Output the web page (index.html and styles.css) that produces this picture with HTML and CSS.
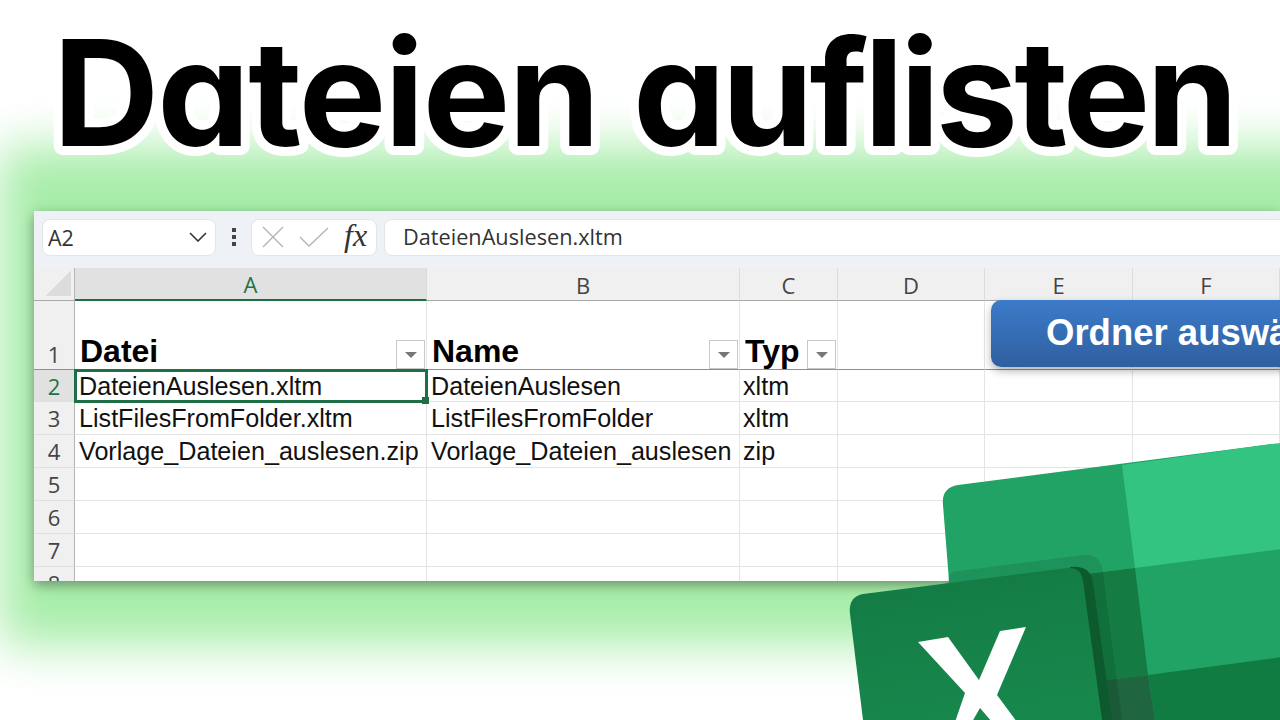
FILE: index.html
```html
<!DOCTYPE html>
<html lang="de">
<head>
    <meta charset="UTF-8">
    <meta name="viewport" content="width=device-width, initial-scale=1.0">
    <title>Dateien auflisten</title>
    <link rel="stylesheet" href="styles.css">
</head>
<body>
    <!-- Headline -->
    <h1 class="headline">
        <svg width="1280" height="211" viewBox="0 0 1280 211">
            <text class="headline-text" x="53" y="146">Dateien <tspan class="headline-tight" x="633">auflisten</tspan></text>
        </svg>
    </h1>

    <!-- Excel window -->
    <section class="sheet">
        <div class="formula-bar">
            <div class="name-box">
                <span>A2</span>
                <svg width="18" height="10" viewBox="0 0 18 10"><path d="M1 1l8 8 8-8" fill="none" stroke="#333" stroke-width="1.6"/></svg>
            </div>
            <div class="bar-dots"><i></i><i></i><i></i></div>
            <div class="fx-box">
                <svg width="24" height="24" viewBox="0 0 24 24"><path d="M2 2l20 20M22 2L2 22" fill="none" stroke="#b4b4b4" stroke-width="1.4"/></svg>
                <svg width="30" height="22" viewBox="0 0 30 22"><path d="M1 11l9 9L29 2" fill="none" stroke="#b4b4b4" stroke-width="1.4"/></svg>
                <span class="fx">fx</span>
            </div>
            <div class="formula-input">DateienAuslesen.xltm</div>
        </div>

        <div class="grid-wrap">
            <table class="grid">
                <colgroup>
                    <col class="col-head"><col class="col-a"><col class="col-b"><col class="col-c">
                    <col class="col-d"><col class="col-e"><col class="col-f">
                </colgroup>
                <tr class="letters">
                    <th class="corner"><span class="corner-mark"></span></th>
                    <th class="active-col">A</th><th>B</th><th>C</th><th>D</th><th>E</th><th>F</th>
                </tr>
                <tr class="row-title">
                    <th>1</th>
                    <td><div class="title-cell">Datei<span class="filter-btn"></span></div></td>
                    <td><div class="title-cell">Name<span class="filter-btn"></span></div></td>
                    <td><div class="title-cell">Typ<span class="filter-btn"></span></div></td>
                    <td></td><td></td><td></td>
                </tr>
                <tr class="row-first">
                    <th class="active-row">2</th>
                    <td class="selected">DateienAuslesen.xltm</td><td>DateienAuslesen</td><td>xltm</td><td></td><td></td><td></td>
                </tr>
                <tr>
                    <th>3</th>
                    <td>ListFilesFromFolder.xltm</td><td>ListFilesFromFolder</td><td>xltm</td><td></td><td></td><td></td>
                </tr>
                <tr>
                    <th>4</th>
                    <td>Vorlage_Dateien_auslesen.zip</td><td>Vorlage_Dateien_auslesen</td><td>zip</td><td></td><td></td><td></td>
                </tr>
                <tr><th>5</th><td></td><td></td><td></td><td></td><td></td><td></td></tr>
                <tr><th>6</th><td></td><td></td><td></td><td></td><td></td><td></td></tr>
                <tr><th>7</th><td></td><td></td><td></td><td></td><td></td><td></td></tr>
                <tr><th>8</th><td></td><td></td><td></td><td></td><td></td><td></td></tr>
            </table>
            <div class="macro-btn">Ordner auswählen</div>
        </div>
    </section>

    <!-- Excel logo -->
    <svg class="logo" width="1280" height="720" viewBox="0 0 1280 720">
        <defs>
            <linearGradient id="front" x1="0" y1="0" x2="0.25" y2="1">
                <stop offset="0" stop-color="#127a43"/>
                <stop offset="1" stop-color="#18874c"/>
            </linearGradient>
        </defs>
        <path d="M943 505Q941 488 958 485L1272 444Q1280 443 1290 444V720H960Z" fill="#21a366"/>
        <path d="M1122 465L1272 444Q1280 443 1290 444V548L1135 568Z" fill="#33c481"/>
        <path d="M952 591L1135 568L1148 675L1097 681V720H960Z" fill="#147c43"/>
        <path d="M1148 675L1290 656V720H1155Z" fill="#107c41"/>
        <path d="M1097 681L1148 675L1155 720H1102Z" fill="#1f6540"/>
        <path d="M952 572L1082 555Q1101 553 1103 573L1122 720H863Z" fill="#000" fill-opacity=".1"/>
        <path d="M1070 567Q1091 565 1093 583L1112 720H1090Z" fill="#0c5a2e"/>
        <path d="M850 614Q848 597 863 594L1068 568Q1081 567 1083 581L1102 720H863Z" fill="url(#front)"/>
        <path d="M918 642L948 637L979 680L1000 631L1026 627L997 695L1017 722H992L980 708L972 722H955L965 693Z" fill="#fff"/>
    </svg>
</body>
</html>
```

FILE: styles.css
```css
/* General Styles */
html, body {
    margin: 0;
    height: 720px;
    overflow: hidden;
}
body {
    position: relative;
    background: #fff;
    font-family: "Liberation Sans", Arial, sans-serif;
    color: #111;
}

/* Headline */
.headline {
    position: relative;
    z-index: 2;
    margin: 0;
    height: 211px;
}
.headline svg {
    display: block;
}
.headline-text {
    font-family: Inter, "Liberation Sans", sans-serif;
    font-feature-settings: "cv11" 1;
    font-size: 147px;
    font-weight: 700;
    letter-spacing: -1.8px;
    fill: #000;
    stroke: #fff;
    stroke-width: 18px;
    stroke-linejoin: round;
    paint-order: stroke fill;
}
.headline-tight {
    letter-spacing: -3.9px;
}

/* Sheet */
.sheet {
    position: relative;
    z-index: 1;
    margin-left: 34px;
    height: 370px;
    background: #fff;
}
.sheet::before {
    content: "";
    position: absolute;
    z-index: -1;
    top: -64px;
    right: -150px;
    bottom: -64px;
    left: -34px;
    background: #a7eda9;
    filter: blur(24px);
}
.sheet::after {
    content: "";
    position: absolute;
    z-index: -1;
    top: 0;
    right: 0;
    bottom: 0;
    left: 0;
    box-shadow: 0 4px 12px rgba(0, 0, 0, 0.38);
}

/* Formula bar */
.formula-bar {
    position: relative;
    display: flex;
    align-items: center;
    height: 57px;
    padding: 0 0 0 8px;
    background: #eef1f5;
}
.name-box, .fx-box, .formula-input {
    box-sizing: border-box;
    height: 37px;
    margin-top: -5px;
    background: #fff;
    border: 1px solid #e3e5e8;
    border-radius: 8px;
}
.name-box {
    display: flex;
    justify-content: space-between;
    align-items: center;
    width: 174px;
    padding: 0 8px 0 5px;
    font-family: "Open Sans", sans-serif;
    font-size: 21.5px;
    color: #333;
}
.bar-dots {
    display: flex;
    flex-direction: column;
    gap: 3px;
    width: 35px;
    margin-top: -5px;
    align-items: center;
}
.bar-dots i {
    width: 4px;
    height: 4px;
    background: #444;
}
.fx-box {
    display: flex;
    align-items: center;
    gap: 14px;
    width: 126px;
    padding-left: 9px;
}
.fx {
    font-family: "Liberation Serif", serif;
    font-style: italic;
    font-size: 32px;
    color: #333;
    margin-left: 1px;
    margin-top: -3px;
}
.formula-input {
    flex: 1;
    margin-left: 7px;
    margin-right: -10px;
    padding: 4px 0 0 18px;
    font-family: "Open Sans", sans-serif;
    font-size: 21.7px;
    line-height: 26px;
    color: #333;
}

/* Grid */
.grid-wrap {
    position: relative;
    height: 313px;
    overflow: hidden;
    background: #fff;
}
.grid {
    border-collapse: separate;
    border-spacing: 0;
    table-layout: fixed;
    width: 1246px;
    background: #fff;
}
.col-head { width: 41px; }
.col-a { width: 352px; }
.col-b { width: 313px; }
.col-c { width: 98px; }
.col-d { width: 147px; }
.col-e { width: 148px; }
.col-f { width: 147px; }
.grid th {
    box-sizing: border-box;
    padding: 0;
    background: #f0f0f0;
    border-right: 1px solid #dcdcdc;
    border-bottom: 1px solid #e0e0e0;
    font-family: "Open Sans", sans-serif;
    font-size: 22px;
    line-height: 30px;
    font-weight: 400;
    color: #444;
}
.grid tr > th:first-child {
    border-right: 1px solid #b4b4b4;
}
.grid td {
    box-sizing: border-box;
    height: 33px;
    padding: 0 0 0 4px;
    border-right: 1px solid #e4e4e4;
    border-bottom: 1px solid #e4e4e4;
    font-size: 25.15px;
    line-height: 30px;
    white-space: nowrap;
    overflow: hidden;
}
.grid td:nth-child(4) {
    padding-left: 3px;
}
.grid .row-first th, .grid .row-first td {
    height: 32px;
}
.grid .letters th {
    height: 33px;
    border-bottom: 1px solid #a8a8a8;
    line-height: 30px;
    padding-top: 1px;
}
.grid .letters th.active-col {
    background: #e1e1e1;
    border-bottom: 2px solid #1e6f45;
    color: #217346;
}
.corner {
    position: relative;
}
.corner-mark {
    position: absolute;
    right: 3px;
    bottom: 4px;
    width: 26px;
    height: 25px;
    background: linear-gradient(135deg, transparent 50%, #dcdcdc 50%);
}
.grid th.active-row {
    background: #e1e1e1;
    color: #217346;
}

/* Header row */
.grid .row-title th {
    height: 69px;
    border-bottom: 1px solid #8f8f8f;
    vertical-align: bottom;
}
.grid .row-title td {
    height: 69px;
    padding: 0;
    border-bottom: 1px solid #8f8f8f;
    vertical-align: bottom;
}
.title-cell {
    display: flex;
    align-items: flex-end;
    justify-content: space-between;
    padding: 0 1px 0 5px;
    font-size: 32px;
    font-weight: 700;
    line-height: 36px;
    color: #000;
}
.filter-btn {
    position: relative;
    box-sizing: border-box;
    width: 29px;
    height: 29px;
    background: #fff;
    border: 1px solid #c8c8c8;
}
.filter-btn::after {
    content: "";
    position: absolute;
    left: 8px;
    top: 11px;
    border-left: 6px solid transparent;
    border-right: 6px solid transparent;
    border-top: 6px solid #777;
}

/* Selected cell */
.grid td.selected {
    position: relative;
    overflow: visible;
    outline: 3px solid #1e6f45;
    outline-offset: -2px;
}
.selected::after {
    content: "";
    position: absolute;
    right: -3px;
    bottom: -3px;
    width: 7px;
    height: 7px;
    background: #1e6f45;
}

/* Macro button */
.macro-btn {
    position: absolute;
    left: 957px;
    top: 32px;
    width: 400px;
    height: 67px;
    box-sizing: border-box;
    padding: 13px 0 0 55px;
    border-radius: 10px;
    background: linear-gradient(#3c7bc9, #2f5f9f);
    box-shadow: 0 4px 8px rgba(0, 0, 0, 0.3);
    color: #fff;
    font-size: 36.5px;
    font-weight: 700;
    line-height: 40px;
    white-space: nowrap;
}

/* Logo */
.logo {
    position: absolute;
    z-index: 3;
    left: 0;
    top: 0;
}
```
